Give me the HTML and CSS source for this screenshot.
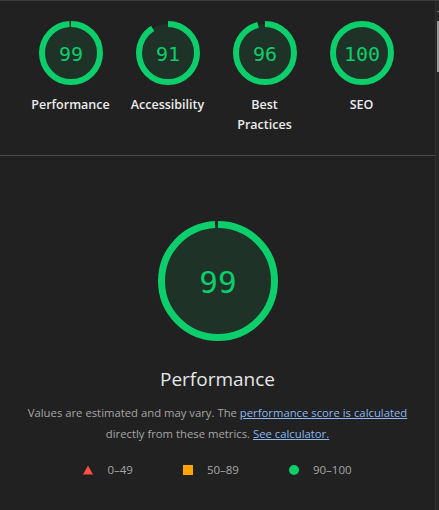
FILE: index.html
```html
<!DOCTYPE html>
<html>
<head>
<meta charset="utf-8">
<link rel="stylesheet" href="styles.css">
</head>
<body>
<div class="frame">
  <div class="main">
    <div class="summary">
      <div class="gauge-item">
        <svg class="gauge-sm" viewBox="0 0 64 64" width="64" height="64">
          <circle class="fill" cx="32" cy="32" r="29"/>
          <circle class="arc" cx="32" cy="32" r="29" stroke-width="6" stroke-dasharray="180.4 182.2" transform="rotate(-90 32 32)"/>
          <text x="32" y="39.5" class="num">99</text>
        </svg>
        <div class="label">Performance</div>
      </div>
      <div class="gauge-item">
        <svg class="gauge-sm" viewBox="0 0 64 64" width="64" height="64">
          <circle class="fill" cx="32" cy="32" r="29"/>
          <circle class="arc" cx="32" cy="32" r="29" stroke-width="6" stroke-dasharray="165.8 182.2" transform="rotate(-90 32 32)"/>
          <text x="32" y="39.5" class="num">91</text>
        </svg>
        <div class="label">Accessibility</div>
      </div>
      <div class="gauge-item">
        <svg class="gauge-sm" viewBox="0 0 64 64" width="64" height="64">
          <circle class="fill" cx="32" cy="32" r="29"/>
          <circle class="arc" cx="32" cy="32" r="29" stroke-width="6" stroke-dasharray="174.9 182.2" transform="rotate(-90 32 32)"/>
          <text x="32" y="39.5" class="num">96</text>
        </svg>
        <div class="label">Best Practices</div>
      </div>
      <div class="gauge-item">
        <svg class="gauge-sm" viewBox="0 0 64 64" width="64" height="64">
          <circle class="fill" cx="32" cy="32" r="29"/>
          <circle class="arc" cx="32" cy="32" r="29" stroke-width="6" stroke-dasharray="182.2 182.2" transform="rotate(-90 32 32)"/>
          <text x="32" y="39.5" class="num">100</text>
        </svg>
        <div class="label">SEO</div>
      </div>
    </div>
    <div class="perf">
      <svg class="gauge-lg" viewBox="0 0 120 120" width="120" height="120">
        <circle class="fill" cx="60" cy="60" r="56.5"/>
        <circle class="arc" cx="60" cy="60" r="56.5" stroke-width="7" stroke-dasharray="351.4 355" transform="rotate(-90 60 60)"/>
        <text x="60" y="71.5" class="num-lg">99</text>
      </svg>
      <div class="title">Performance</div>
      <p class="desc">Values are estimated and may vary. The <a href="#">performance score is calculated</a> directly from these metrics. <a href="#">See calculator.</a></p>
      <div class="legend">
        <div class="leg-item"><svg width="10" height="10" viewBox="0 0 10 10"><polygon points="5,0.5 10,9.5 0,9.5" fill="#ff4e42"/></svg><span>0–49</span></div>
        <div class="leg-item"><span class="sq"></span><span>50–89</span></div>
        <div class="leg-item"><span class="dot"></span><span>90–100</span></div>
      </div>
    </div>
  </div>
  <div class="scrollbar">
    <div class="sb-arrow"></div>
    <div class="sb-thumb"></div>
  </div>
</div>
</body>
</html>
```
FILE: styles.css
```css
html, body {
  margin: 0;
  padding: 0;
  background: #212121;
}
body {
  width: 439px;
  height: 510px;
  overflow: hidden;
  font-family: "Open Sans", "Noto Sans", sans-serif;
  color: #e3e3e3;
}
.frame {
  display: flex;
  height: 509px;
  border-top: 1px solid #3d3d3d;
}
.main {
  flex: 1;
  min-width: 0;
}
.scrollbar {
  width: 4px;
  background: #262626;
  border-left: 1px solid #2e2e2e;
  box-sizing: border-box;
  display: flex;
  flex-direction: column;
  align-items: flex-end;
}
.sb-arrow {
  width: 2px;
  height: 1px;
  background: #777;
  margin-top: 10px;
}
.sb-thumb {
  width: 2px;
  height: 51px;
  background: #9a9a9a;
  margin-top: 9px;
}
.summary {
  display: flex;
  padding: 20px 0 20px 22px;
  border-bottom: 1px solid #4a4a4a;
}
.gauge-item {
  width: 97px;
  display: flex;
  flex-direction: column;
  align-items: center;
}
.gauge-sm, .gauge-lg {
  display: block;
}
.fill {
  fill: #1f3228;
}
.arc {
  fill: none;
  stroke: #0cce6b;
}
.num {
  fill: #0cce6b;
  font-family: "DejaVu Sans Mono", "Liberation Mono", monospace;
  font-size: 20px;
  text-anchor: middle;
}
.num-lg {
  fill: #0cce6b;
  font-family: "DejaVu Sans Mono", "Liberation Mono", monospace;
  font-size: 31px;
  text-anchor: middle;
}
.label {
  margin-top: 10px;
  max-width: 84px;
  text-align: center;
  font-size: 12.5px;
  font-weight: 600;
  line-height: 20px;
  color: #ececec;
}
.perf {
  display: flex;
  flex-direction: column;
  align-items: center;
  padding-top: 65px;
}
.title {
  margin-top: 24px;
  font-size: 19px;
  line-height: 28px;
  color: #e6e6e6;
}
.desc {
  margin: 9px 0 0;
  max-width: 384px;
  text-align: center;
  font-size: 11.3px;
  line-height: 21px;
  color: #a6a6a6;
}
.desc a {
  color: #8ab8f0;
  text-decoration: underline;
}
.legend {
  display: flex;
  gap: 50px;
  margin-top: 16px;
  font-size: 11.5px;
  line-height: 20px;
  color: #a6a6a6;
}
.leg-item {
  display: flex;
  align-items: center;
  gap: 14px;
}
.leg-item svg {
  display: block;
}
.sq {
  width: 10px;
  height: 10px;
  background: #ffa400;
}
.dot {
  width: 10px;
  height: 10px;
  border-radius: 50%;
  background: #0cce6b;
}
```
